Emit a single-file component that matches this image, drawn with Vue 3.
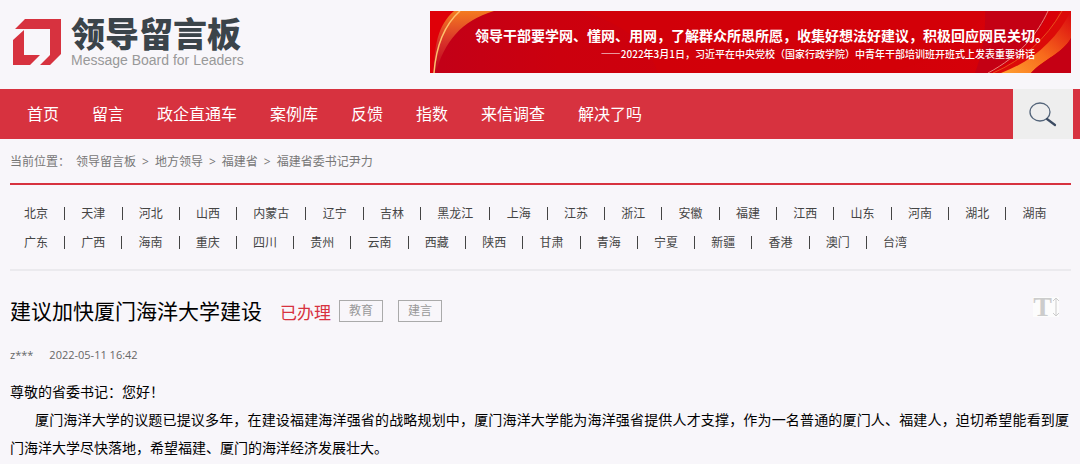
<script setup>
const navItems = ['首页', '留言', '政企直通车', '案例库', '反馈', '指数', '来信调查', '解决了吗']
const crumbs = ['领导留言板', '地方领导', '福建省', '福建省委书记尹力']
const regionRows = [
  ['北京', '天津', '河北', '山西', '内蒙古', '辽宁', '吉林', '黑龙江', '上海', '江苏', '浙江', '安徽', '福建', '江西', '山东', '河南', '湖北', '湖南'],
  ['广东', '广西', '海南', '重庆', '四川', '贵州', '云南', '西藏', '陕西', '甘肃', '青海', '宁夏', '新疆', '香港', '澳门', '台湾'],
]
const tags = ['教育', '建言']
const paragraphs = [
  '厦门海洋大学的议题已提议多年，在建设福建海洋强省的战略规划中，厦门海洋大学能为海洋强省提供人才支撑，作为一名普通的厦门人、福建人，迫切希望能看到厦门海洋大学尽快落地，希望福建、厦门的海洋经济发展壮大。',
]
</script>

<template>
  <div class="page" lang="zh-CN">
    <header class="header">
      <a class="logo" href="#">
        <svg class="logo-mark" viewBox="0 0 49 48" aria-hidden="true">
          <path d="M12 1H48V36L37 47H27L37 37V11H2Z" fill="#d7323f" />
          <path d="M0 22L11 12V37H27L17 47H0Z" fill="#d7323f" />
        </svg>
        <span class="logo-text">
          <span class="logo-name">领导留言板</span>
          <span class="logo-sub">Message Board for Leaders</span>
        </span>
      </a>
      <a class="banner" href="#">
        <svg class="banner-art" viewBox="0 0 641 62" preserveAspectRatio="none" aria-hidden="true">
          <defs>
            <linearGradient id="base" x1="0" x2="1" y1="0" y2="0">
              <stop offset="0" stop-color="#c20018" />
              <stop offset=".2" stop-color="#cc000e" />
              <stop offset=".7" stop-color="#d20009" />
              <stop offset="1" stop-color="#d90008" />
            </linearGradient>
            <linearGradient id="flameL" x1="0" x2="0" y1="0" y2="1">
              <stop offset="0" stop-color="#f47b20" />
              <stop offset=".5" stop-color="#d8322a" />
              <stop offset="1" stop-color="#bd001c" />
            </linearGradient>
            <linearGradient id="flameR" x1="0" x2="1" y1="1" y2="0">
              <stop offset="0" stop-color="#ffa030" />
              <stop offset=".45" stop-color="#f86a1c" />
              <stop offset="1" stop-color="#d9060e" />
            </linearGradient>
          </defs>
          <rect width="641" height="62" fill="url(#base)" />
          <path d="M150 0C195 12 220 36 228 62H430C490 62 540 30 555 0Z" fill="#d30009" opacity=".7" />
          <path d="M555 0C556 26 551 46 545 62H560C595 42 612 20 618 0Z" fill="#bd0018" opacity=".75" />
          <path d="M0 0H25C8 17 5 40 4 62H0Z" fill="#df0008" />
          <path d="M24 0H64C31 10 14 31 6 62H3C5 35 7 15 24 0Z" fill="url(#flameL)" />
          <path d="M30 0C13 15 6 36 4 62" fill="none" stroke="#ffc06c" stroke-width="1.500" />
          <path d="M563 62C597 47 619 27 630 0H641V25L600 62Z" fill="#dc0b09" />
          <path d="M571 62C603 50 626 29 641 0V27C633 42 614 48 601 62Z" fill="url(#flameR)" />
          <path d="M601 62C614 48 633 42 641 27V62Z" fill="#c50014" />
          <path d="M618 0C608 22 590 45 558 62" fill="none" stroke="#ee8175" stroke-width="1" />
          <path d="M632 0C616 28 593 49 563 62" fill="none" stroke="#e8501c" stroke-width="1" />
        </svg>
        <span class="banner-title">领导干部要学网、懂网、用网，了解群众所思所愿，收集好想法好建议，积极回应网民关切。</span>
        <span class="banner-source">——2022年3月1日，习近平在中央党校（国家行政学院）中青年干部培训班开班式上发表重要讲话</span>
      </a>
    </header>

    <nav class="nav">
      <ul class="nav-list">
        <li v-for="item in navItems" :key="item"><a href="#">{{ item }}</a></li>
      </ul>
      <button class="search" type="button" aria-label="搜索">
        <svg width="28" height="26" viewBox="0 0 28 26" fill="none" aria-hidden="true">
          <ellipse cx="11" cy="11" rx="10" ry="9" stroke="#54657a" stroke-width="1.300" />
          <path d="M18 18L26 24" stroke="#3b4b62" stroke-width="2.200" stroke-linecap="round" />
        </svg>
      </button>
    </nav>

    <main class="content">
      <div class="crumbs">
        <span class="crumb-label">当前位置：</span>
        <template v-for="(crumb, i) in crumbs" :key="crumb">
          <span v-if="i" class="crumb-arrow">&gt;</span>
          <a href="#">{{ crumb }}</a>
        </template>
      </div>

      <div class="regions">
        <div v-for="(row, r) in regionRows" :key="r" class="region-row">
          <template v-for="(name, i) in row" :key="name">
            <i v-if="i" class="bar"></i>
            <a href="#">{{ name }}</a>
          </template>
        </div>
      </div>

      <article>
        <div class="title-row">
          <h1>建议加快厦门海洋大学建设</h1>
          <span class="status">已办理</span>
          <span class="tags"><span v-for="tag in tags" :key="tag" class="tag">{{ tag }}</span></span>
          <button class="font-size" type="button" aria-label="调整字号">
            <span>T</span>
            <svg width="6" height="20" viewBox="0 0 6 20" fill="none" stroke="#ccc" aria-hidden="true">
              <path d="M3 1V19M0 4L3 1L6 4M0 16L3 19L6 16" />
            </svg>
          </button>
        </div>
        <div class="meta"><span>z***</span><time datetime="2022-05-11T16:42">2022-05-11 16:42</time></div>
        <div class="message">
          <p class="greeting">尊敬的省委书记：您好！</p>
          <p v-for="(text, i) in paragraphs" :key="i">{{ text }}</p>
        </div>
      </article>
    </main>
  </div>
</template>

<style>
body {
  background: #f8f6fa;
}
</style>

<style scoped>
.page {
  font-family: "Open Sans", "Noto Sans CJK SC", sans-serif;
  font-size: 12px;
  color: #000;
  background: #f8f6fa;
}
a {
  color: inherit;
  text-decoration: none;
}
button {
  border: 0;
  padding: 0;
  cursor: pointer;
}
.header {
  display: flex;
  justify-content: space-between;
  align-items: flex-start;
  padding: 11px 9px 16px 13px;
}
.logo {
  display: flex;
  gap: 9px;
  padding-top: 7px;
}
.logo-mark {
  width: 49px;
  height: 48px;
}
.logo-text {
  display: flex;
  flex-direction: column;
  gap: 4px;
}
.logo-name {
  font-family: "Noto Sans CJK SC", sans-serif;
  font-size: 34px;
  line-height: 30px;
  font-weight: 900;
  color: #3b444a;
}
.logo-sub {
  font-family: "Liberation Sans", Arial, sans-serif;
  font-size: 14px;
  line-height: 16px;
  color: #999;
}
.banner {
  position: relative;
  display: flex;
  flex-direction: column;
  align-items: flex-end;
  box-sizing: border-box;
  flex: 0 0 641px;
  padding: 14px 22px 10px 0;
  color: #fff;
  font-family: "Noto Sans CJK SC", sans-serif;
  white-space: nowrap;
}
.banner-art {
  position: absolute;
  inset: 0;
  width: 100%;
  height: 100%;
}
.banner-title {
  position: relative;
  font-size: 14px;
  line-height: 20px;
  font-weight: 700;
}
.banner-source {
  position: relative;
  font-size: 10px;
  line-height: 18px;
  padding-right: 14px;
  font-weight: 500;
}
.nav {
  display: flex;
  justify-content: space-between;
  height: 50px;
  padding: 0 7px 0 27px;
  background: #d7323f;
}
.nav-list {
  display: flex;
  align-items: center;
  gap: 33px;
  margin: 0;
  padding: 0 0 2px;
  list-style: none;
  color: #fff;
  font-size: 16px;
}
.search {
  display: flex;
  align-items: center;
  justify-content: center;
  width: 60px;
  background: #eee;
}
.content {
  padding: 0 9px 0 10px;
}
.crumbs {
  display: flex;
  align-items: center;
  height: 44px;
  color: #777;
  border-bottom: 2px solid #d7323f;
}
.crumb-label {
  margin-right: 6px;
}
.crumb-arrow {
  margin: 0 6px;
}
.regions {
  padding: 14px 24px 12px 14px;
  border-bottom: 2px solid #ebeaee;
  color: #444;
}
.region-row {
  display: flex;
  justify-content: space-between;
  align-items: center;
  line-height: 29px;
}
.region-row + .region-row {
  margin-right: 140px;
}
.bar {
  width: 1px;
  height: 13px;
  background: #444;
}
.title-row {
  display: flex;
  align-items: center;
  padding-top: 24px;
}
h1 {
  margin: 0 18px 0 0;
  font-size: 21px;
  line-height: 32px;
  font-weight: 400;
}
.status {
  margin-right: 8px;
  font-size: 17px;
  color: #d7323f;
}
.tags {
  display: flex;
  gap: 15px;
}
.tag {
  padding: 0 9px;
  border: 1px solid #aaa;
  font-size: 12px;
  line-height: 20px;
  color: #999;
}
.font-size {
  display: flex;
  align-items: center;
  gap: 1px;
  height: 20px;
  margin: 0 12px 8px auto;
  background: #fcfcfc;
  color: #ccc;
}
.font-size span {
  font: 700 28px/20px "Liberation Serif", serif;
}
.meta {
  display: flex;
  gap: 16px;
  padding: 18px 0 13px;
  font-size: 11px;
  line-height: 20px;
  color: #666;
}
.message {
  padding-right: 2px;
  font-size: 14px;
  line-height: 28px;
  text-align: justify;
}
.message p {
  margin: 0;
  text-indent: 25px;
}
.message .greeting {
  text-indent: 0;
}
</style>
